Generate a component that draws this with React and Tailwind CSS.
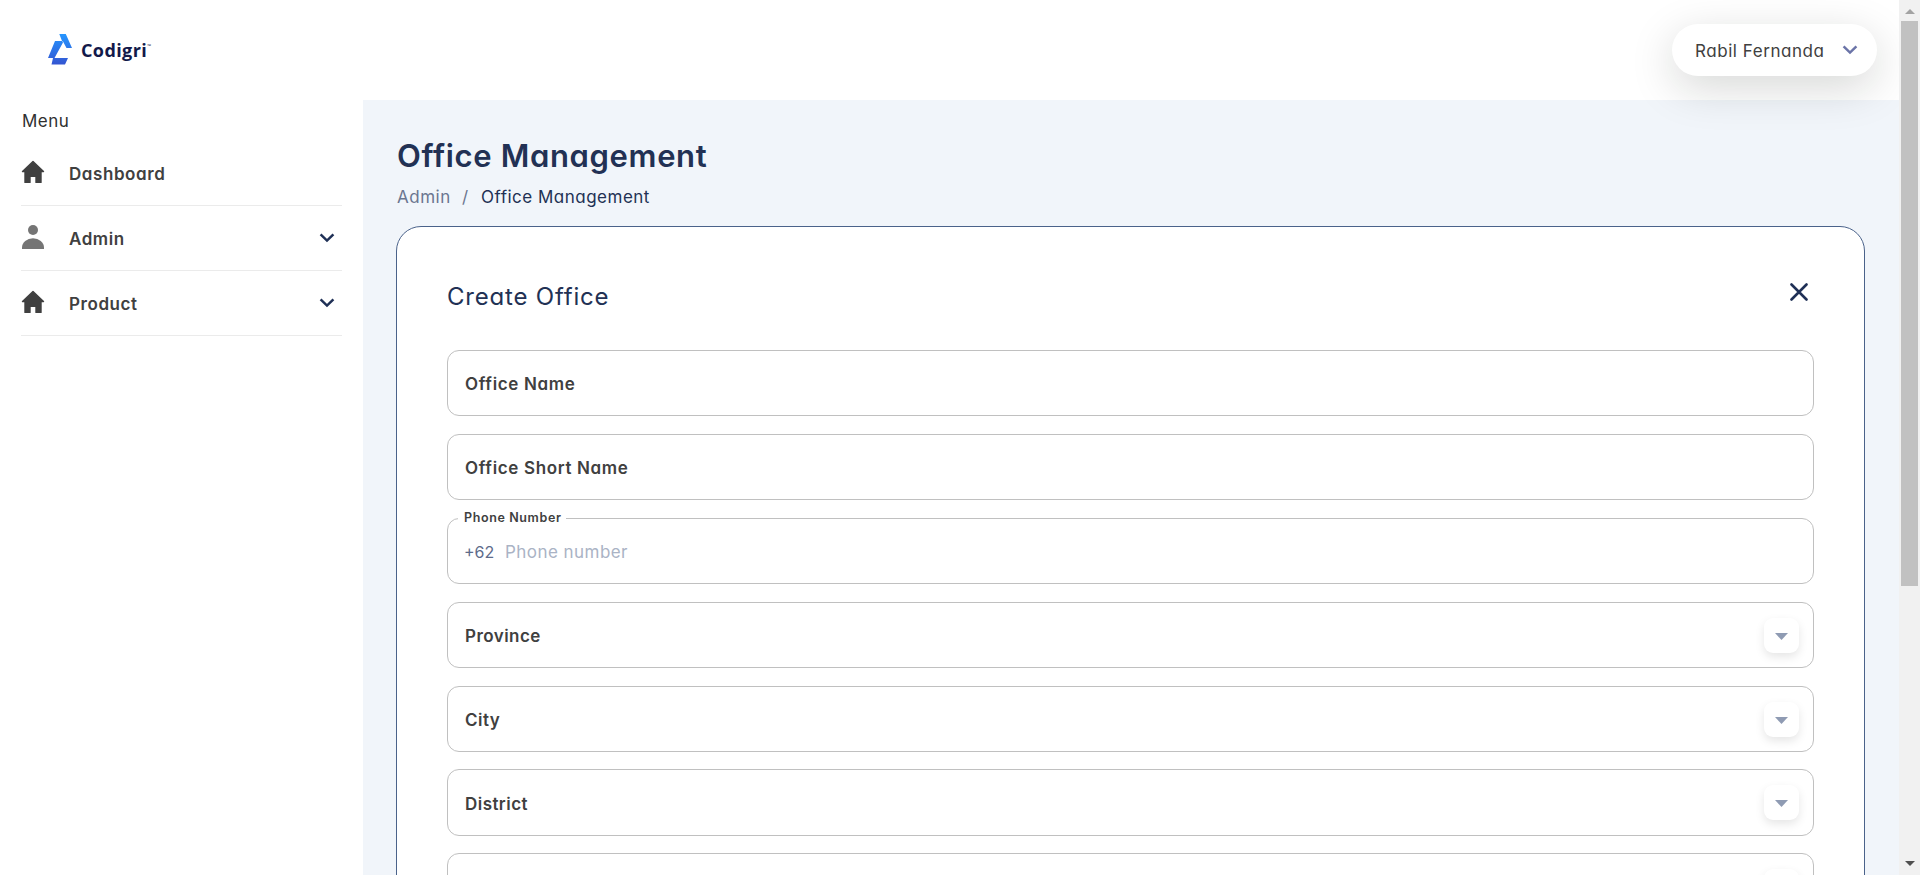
function Home() {
  return (
    <svg className="h-6 w-6" viewBox="0 0 24 24" fill="#404040" stroke="#404040">
      <path d="M12 1.600 1.500 11.600h2.500V22.400h5V16.400h6v6h5V11.600h2.500Z" strokeWidth="1.4" strokeLinejoin="round" />
    </svg>
  );
}

function User() {
  return (
    <svg className="h-6 w-6" viewBox="0 0 24 24" fill="#757575">
      <circle cx="12" cy="5" r="5" />
      <path d="M1 24v-1.500a11 9.300 0 0 1 22 0V24Z" />
    </svg>
  );
}

function Chevron({ color }) {
  return (
    <svg className="h-[10px] w-4" viewBox="0 0 16 10" fill="none">
      <path d="M1.6 1.4 8 7.6 14.4 1.4" stroke={color} strokeWidth="2.5" />
    </svg>
  );
}

function Logo() {
  return (
    <div className="flex h-[31px] items-center pl-12">
      <svg className="h-[31px] w-6" viewBox="0 0 24 31">
        <defs>
          <linearGradient id="logo" x1="0" y1="0" x2="0" y2="31" gradientUnits="userSpaceOnUse">
            <stop offset="0" stopColor="#2596ff" />
            <stop offset="1" stopColor="#3454d1" />
          </linearGradient>
        </defs>
        <path fill="url(#logo)" d="M11.300 0h6.500L24 14h-5.500L15 7.500 14 7ZM7 7h7l1 1.500L6.500 24H0ZM5 24h15l-3 6.500H3.500Z" />
      </svg>
      <span className="ml-[9px] pt-px font-['Open_Sans',sans-serif] text-[18px] font-bold leading-[31px] tracking-[0.4px] text-[#12194a]">Codigri</span>
      <span className="self-start pt-[9px] font-['Open_Sans',sans-serif] text-[5px] leading-[6px] text-[#12194a]">™</span>
    </div>
  );
}

const menu = [
  { label: "Dashboard", icon: Home },
  { label: "Admin", icon: User, open: true },
  { label: "Product", icon: Home, open: true },
];

function Field({ label, select, className = "h-[66px]", tracking = "tracking-[0.45px]" }) {
  return (
    <div className={`flex shrink-0 items-center justify-between rounded-xl border border-[#c0c0c0] pl-[17px] pr-[14px] ${className}`}>
      <span className={`pt-[2px] text-[17px] font-semibold leading-6 text-[#404040] ${tracking}`}>{label}</span>
      {select && (
        <span className="flex h-[35px] w-[35px] items-center justify-center rounded-[9px] bg-white pt-[2px] shadow-[0_4px_10px_rgba(0,0,0,0.1)]">
          <svg className="h-[7px] w-[13px]" viewBox="0 0 13 7"><path d="M0 0h13L6.500 7Z" fill="#8f9bb3" /></svg>
        </span>
      )}
    </div>
  );
}

function PhoneField() {
  return (
    <div className="relative flex h-[66px] shrink-0 items-center rounded-xl border border-[#c0c0c0] pl-[17px] pt-[2px]">
      <span className="absolute -top-[9px] left-[10px] bg-white pl-[6px] pr-[4px] text-[12.500px] font-semibold leading-4 tracking-[0.620px] text-[#404040]">Phone Number</span>
      <span className="-ml-px w-[41px] text-[16px] leading-6 text-[#5d6b8a]">+62</span>
      <span className="text-[17px] leading-6 tracking-[0.450px] text-[#aab3c5]">Phone number</span>
    </div>
  );
}

export default function App() {
  return (
    <div className="flex h-[875px] w-[1920px] overflow-hidden bg-[#f1f5fa] font-[Inter,sans-serif] [font-feature-settings:'cv11']">
      <aside className="w-[363px] shrink-0 bg-white pt-[34px]">
        <Logo />
        <div className="mt-[44px] pl-[22px] text-[17px] leading-6 tracking-[0.5px] text-[#303030]">Menu</div>
        <nav className="mt-[8px] px-[21px]">
          {menu.map((m) => (
            <div key={m.label} className="flex h-[65px] items-center border-b border-[#ebebeb] pr-[7px]">
              <span className="-mt-[2px]"><m.icon /></span>
              <span className="ml-6 flex-1 pt-[2px] text-[17px] font-semibold leading-6 tracking-[0.570px] text-[#404040]">{m.label}</span>
              {m.open && <Chevron color="#1f3056" />}
            </div>
          ))}
        </nav>
      </aside>
      <div className="flex w-[1536px] shrink-0 flex-col overflow-hidden">
        <header className="flex h-[100px] shrink-0 items-center justify-end bg-white pr-[22px]">
          <div className="flex h-[52px] w-[205px] items-center rounded-full bg-white pl-[23px] shadow-[0_12px_44px_rgba(16,24,16,0.17)]">
            <span className="w-[147px] pt-[2px] text-[17px] leading-6 tracking-[0.550px] text-[#404040]">Rabil Fernanda</span>
            <Chevron color="#6b74a8" />
          </div>
        </header>
        <main className="pl-[33px] pr-[34px] text-[#223154]">
          <h1 className="mt-9 pl-px text-[31px] font-semibold leading-10 tracking-[0.650px]">Office Management</h1>
          <div className="mt-[9px] flex pl-px text-[17px] leading-6 tracking-[0.5px]">
            <span className="w-[65px] text-[#6b7690]">Admin</span>
            <span className="w-[19px] text-[#6b7690]">/</span>
            <span>Office Management</span>
          </div>
          <section className="mt-[17px] h-[900px] rounded-[25px] border border-[#4a628a] bg-white px-[50px]">
            <div className="flex h-[123px] justify-between pr-[6px]">
              <h2 className="pt-[54px] text-[24px] leading-8 tracking-[0.8px]">Create Office</h2>
              <svg className="mt-[56px] h-[18px] w-[18px]" viewBox="0 0 18 18"><path d="m1.500 1.500 15 15m0-15-15 15" stroke="#1f3056" strokeWidth="2.600" strokeLinecap="round" /></svg>
            </div>
            <div className="flex flex-col gap-[18px]">
              <Field label="Office Name" tracking="tracking-[0.65px]" />
              <Field label="Office Short Name" tracking="tracking-[0.65px]" />
              <PhoneField />
              <Field label="Province" select />
              <Field label="City" select />
              <Field label="District" select className="-mt-px h-[67px]" />
              <Field label="" select className="-mt-px h-[66px]" />
            </div>
          </section>
        </main>
      </div>
      <div className="flex w-[21px] shrink-0 flex-col items-center bg-[#f1f1f1]">
        <svg className="mt-[9px] h-[5px] w-[10px] shrink-0" viewBox="0 0 10 5"><path d="M5 0l5 5H0Z" fill="#a3a3a3" /></svg>
        <div className="mt-[7px] h-[565px] w-[17px] shrink-0 bg-[#c1c1c1]" />
        <svg className="mt-[275px] h-[5px] w-[10px] shrink-0" viewBox="0 0 10 5"><path d="M0 0h10L5 5Z" fill="#505050" /></svg>
      </div>
    </div>
  );
}
